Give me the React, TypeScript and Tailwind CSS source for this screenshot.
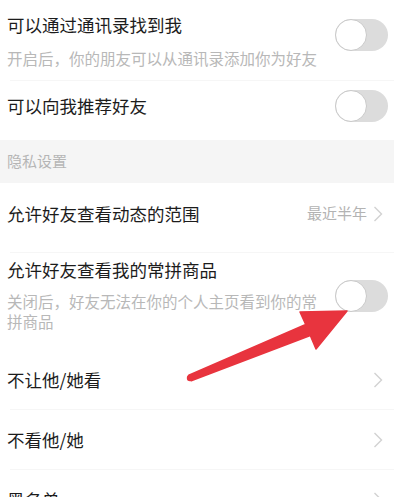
import React from "react";

const font = { fontFamily: '"Noto Sans CJK SC", "Noto Sans", sans-serif' };

const Toggle = ({ className = "" }: { className?: string }) => (
  <div className={`relative h-[32px] w-[53px] shrink-0 rounded-full bg-[#dcdcdc] ${className}`}>
    <div className="absolute left-0 top-0 h-[32px] w-[32px] rounded-full border border-[#c9c9c9] bg-white" />
  </div>
);

const Chevron = () => (
  <svg width="10" height="16" viewBox="0 0 10 16" className="shrink-0">
    <polyline points="1.5,1 8.5,8 1.5,15" fill="none" stroke="#d2d2d2" strokeWidth="1.4" />
  </svg>
);

const Sep = () => <div className="ml-[10px] h-px bg-[#f6f6f6]" />;

const NavRow = ({ title, value }: { title: string; value?: string }) => (
  <div className="flex h-[59px] items-center justify-between pl-[7px] pr-[11px]">
    <span className="text-[17.5px] leading-[24px] text-[#1c1c1c]">{title}</span>
    <div className="flex items-center gap-[6px]">
      {value && <span className="text-[15px] text-[#b3b3b3]">{value}</span>}
      <Chevron />
    </div>
  </div>
);

export default function App() {
  return (
    <div className="relative h-[497px] w-[413px] overflow-hidden bg-white" style={font}>
      <div className="w-[394px] bg-white">
        {/* row 1 */}
        <div className="flex h-[80px] items-center justify-between pl-[7px] pr-[6px]">
          <div className="flex flex-col">
            <span className="text-[17.5px] leading-[24px] text-[#1c1c1c]">可以通过通讯录找到我</span>
            <span className="mt-[11px] text-[15.5px] leading-[20px] text-[#b8b8b8]">
              开启后，你的朋友可以从通讯录添加你为好友
            </span>
          </div>
          <Toggle className="mb-[10px]" />
        </div>
        <Sep />
        {/* row 2 */}
        <div className="flex h-[59px] items-center justify-between pb-[9px] pl-[7px] pr-[6px]">
          <span className="text-[17.5px] leading-[24px] text-[#1c1c1c]">可以向我推荐好友</span>
          <Toggle />
        </div>
        {/* section */}
        <div className="flex h-[43px] items-center bg-[#f5f5f5] pl-[7px]">
          <span className="text-[15px] text-[#b5b5b5]">隐私设置</span>
        </div>
        <div className="flex h-[69px] items-center justify-between pb-[8px] pl-[7px] pr-[11px]">
          <span className="text-[17.5px] leading-[24px] text-[#1c1c1c]">允许好友查看动态的范围</span>
          <div className="flex items-center gap-[6px]">
            <span className="text-[15px] text-[#b3b3b3]">最近半年</span>
            <Chevron />
          </div>
        </div>
        <Sep />
        {/* row 4 */}
        <div className="flex h-[97px] items-start justify-between pl-[7px] pr-[6px] pt-[5px]">
          <div className="flex w-[320px] flex-col">
            <span className="text-[17.5px] leading-[24px] text-[#1c1c1c]">允许好友查看我的常拼商品</span>
            <span className="mt-[9px] text-[15.5px] leading-[20px] text-[#b8b8b8]">
              关闭后，好友无法在你的个人主页看到你的常拼商品
            </span>
          </div>
          <Toggle className="mt-[22px]" />
        </div>
        <NavRow title="不让他/她看" />
        <Sep />
        <NavRow title="不看他/她" />
        <Sep />
        <NavRow title="黑名单" />
      </div>

      <svg
        className="pointer-events-none absolute left-0 top-0"
        width="413"
        height="497"
        viewBox="0 0 413 497"
      >
        <polygon
          points="188.8,375.2 305.7,324.5 300,312 347,311 316,349 310.3,335.5 191.2,380.8"
          fill="#e8343e"
          stroke="#e8343e"
          strokeWidth="1.5"
          strokeLinejoin="round"
        />
        <circle cx="190" cy="378" r="3.2" fill="#e8343e" />
      </svg>
    </div>
  );
}
